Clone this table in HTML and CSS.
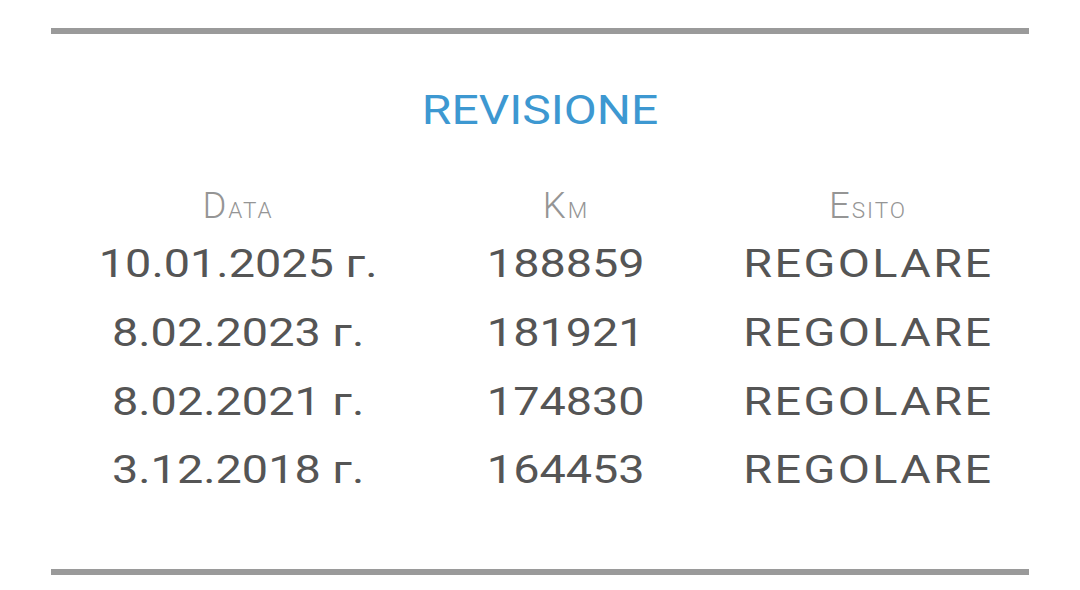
FILE: index.html
```html
<!DOCTYPE html>
<html lang="it">
<head>
<meta charset="utf-8">
<title>Revisione</title>
<link rel="stylesheet" href="styles.css">
</head>
<body>
<div class="page">
  <div class="rule"></div>
  <h1 class="title"><span class="wide">REVISIONE</span></h1>
  <div class="table">
    <div class="head">D<span class="small">ata</span></div>
    <div class="head">K<span class="small">m</span></div>
    <div class="head">E<span class="small">sito</span></div>

    <div class="cell"><span class="wide">10.01.2025 г.</span></div>
    <div class="cell"><span class="wide">188859</span></div>
    <div class="cell"><span class="wide word">REGOLARE</span></div>

    <div class="cell"><span class="wide">8.02.2023 г.</span></div>
    <div class="cell"><span class="wide">181921</span></div>
    <div class="cell"><span class="wide word">REGOLARE</span></div>

    <div class="cell"><span class="wide">8.02.2021 г.</span></div>
    <div class="cell"><span class="wide">174830</span></div>
    <div class="cell"><span class="wide word">REGOLARE</span></div>

    <div class="cell"><span class="wide">3.12.2018 г.</span></div>
    <div class="cell"><span class="wide">164453</span></div>
    <div class="cell"><span class="wide word">REGOLARE</span></div>
  </div>
  <div class="rule rule-bottom"></div>
</div>
</body>
</html>
```

FILE: styles.css
```css
html, body {
  margin: 0;
  padding: 0;
  background: #ffffff;
}

body {
  font-family: Roboto, "Liberation Sans", sans-serif;
}

.page {
  padding: 28px 51px 0;
}

.rule {
  height: 6px;
  background: #9a9a9a;
}

.rule-bottom {
  margin-top: 63.9px;
}

.title {
  margin: 52px 0 0;
  font-size: 41px;
  line-height: 48px;
  font-weight: 400;
  color: #3d98d1;
  text-align: center;
}

.title .wide {
  transform: scaleX(1.17);
}

.wide {
  display: inline-block;
  transform: scaleX(1.2);
  transform-origin: center;
}

.table {
  display: grid;
  grid-template-columns: 374fr 282fr 322fr;
  margin-top: 51.5px;
  text-align: center;
}

.head {
  font-size: 36.5px;
  line-height: 40px;
  font-weight: 300;
  color: #959595;
  letter-spacing: 2px;
  padding-bottom: 4.8px;
}

.small {
  font-size: 22.5px;
  line-height: 0;
  text-transform: uppercase;
}

.cell {
  font-size: 39px;
  line-height: 68.7px;
  color: #555555;
}

.word {
  letter-spacing: 2px;
}
```
